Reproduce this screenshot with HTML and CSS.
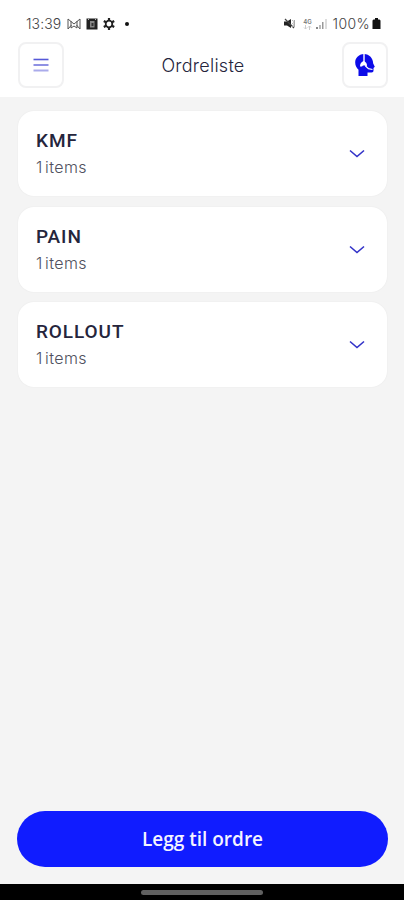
FILE: index.html
```html
<!DOCTYPE html>
<html lang="no">
<head>
  <meta charset="UTF-8" />
  <meta name="viewport" content="width=device-width, initial-scale=1.0"/>
  <title>Ordreliste</title>
  <link rel="stylesheet" href="styles.css">
</head>
<body>
  <div class="app">
    <header class="header">
      <div class="status-bar">
        <div class="status-left">
          <span class="clock">13:39</span>
          <svg class="icon-mail" width="14" height="12" viewBox="0 0 14 12" fill="none" stroke="#555">
            <path d="M1 11V1l6 5 6-5v10M1 11l3.500-4M13 11L9.500 7M4 3v7l3-2 3 2V3"/>
          </svg>
          <svg class="icon-app" width="12" height="12" viewBox="0 0 12 12">
            <rect x=".5" y=".5" width="11" height="11" fill="#222"/>
            <path d="M4 3h4.500v6.500H4z" fill="#888"/>
            <path d="M5.500 5h2v3h-2z" fill="#333"/>
            <path d="M2 1.500h1M9 1.500h1" stroke="#bbb"/>
          </svg>
          <svg class="icon-gear" width="12" height="12" viewBox="0 0 12 12" fill="none" stroke="#222">
            <circle cx="6" cy="6" r="3.300" stroke-width="1.800"/>
            <path d="M6 0v2.500M6 9.500V12M.8 3l2.200 1.300M9 7.700L11.200 9M.8 9L3 7.700M9 4.300L11.200 3" stroke-width="2.200"/>
          </svg>
          <span class="dot"></span>
        </div>
        <div class="status-right">
          <svg class="icon-mute" width="12" height="11" viewBox="0 0 12 11">
            <path d="M0 3.500h3L7 1v9L3 7.500H0z" fill="#222"/>
            <path d="M1 1l9 9" stroke="#444" stroke-width="1.200"/>
            <path d="M8 2.500c2.500 0 2.500 2.500.5 3 2 .5 2 3-.5 3M10.500 2v7" fill="none" stroke="#aaa"/>
          </svg>
          <span class="network">
            <span>4G</span>
            <svg width="9" height="5" viewBox="0 0 9 5" fill="none" stroke="#ccc">
              <path d="M2.500 0v4M1 2.500L2.500 4 4 2.500M6.500 5V1M5 2.500L6.500 1 8 2.500"/>
            </svg>
          </span>
          <svg class="icon-signal" width="12" height="11" viewBox="0 0 12 11">
            <path d="M0 9h2v2H0z" fill="#888"/>
            <path d="M3 7h2v4H3z" fill="#bbb"/>
            <path d="M6 4h1.500v7H6z" fill="#999"/>
            <path d="M9 1h2v10H9z" fill="#ddd"/>
          </svg>
          <span class="battery-text">100%</span>
          <svg class="icon-battery" width="9" height="12" viewBox="0 0 9 12">
            <path d="M3 0h3v1.500h1.500l1 1V11H.5V2.500l1-1H3z" fill="#111"/>
          </svg>
        </div>
      </div>

      <nav class="toolbar">
        <button class="icon-btn" aria-label="Meny">
          <svg width="16" height="14" viewBox="0 0 16 14" stroke-width="1.600">
            <path d="M0.500 1.500h15" stroke="#5558d8"/>
            <path d="M0.500 7h15" stroke="#7476dd"/>
            <path d="M0.500 12.500h15" stroke="#aaabeb" stroke-width="2"/>
          </svg>
        </button>
        <h1>Ordreliste</h1>
        <button class="icon-btn support" aria-label="Support">
          <svg width="20" height="23" viewBox="0 0 20 23">
            <path d="M9 0C3.500.3.200 4 .200 8.500c0 3 1.300 5.500 3.300 7.200V22h9v-3.500h4c1.400 0 2-.8 2-2.200V14l1.300-1.200-1.600-3.300C18 4 14.500.3 9 0z" fill="#0c0be8"/>
            <path d="M9 0v8" stroke="#fff" stroke-width="1.400"/>
            <path d="M8.500 7C6 8.200 5 9.800 5 12.500h2l1-1h2l1 1.500 1-1.500c0-2.300-1.200-3.700-3.500-4.500z" fill="#fff"/>
            <path d="M10.500 12l3 2.700 4 .8" fill="none" stroke="#fff" stroke-width="1.200"/>
          </svg>
        </button>
      </nav>
    </header>

    <main class="orders">
      <section class="card">
        <div class="card-text">
          <h2>KMF</h2>
          <p>1 items</p>
        </div>
        <svg class="chevron" width="16" height="9" viewBox="0 0 16 9"><path d="M1 1.500l7 6 7-6"/></svg>
      </section>
      <section class="card">
        <div class="card-text">
          <h2>PAIN</h2>
          <p>1 items</p>
        </div>
        <svg class="chevron" width="16" height="9" viewBox="0 0 16 9"><path d="M1 1.500l7 6 7-6"/></svg>
      </section>
      <section class="card">
        <div class="card-text">
          <h2>ROLLOUT</h2>
          <p>1 items</p>
        </div>
        <svg class="chevron" width="16" height="9" viewBox="0 0 16 9"><path d="M1 1.500l7 6 7-6"/></svg>
      </section>
    </main>

    <div class="footer">
      <button class="submit-btn">Legg til ordre</button>
    </div>

    <div class="nav-bar"><span class="handle"></span></div>
  </div>
</body>
</html>
```

FILE: styles.css
```css
* {
  margin: 0;
  padding: 0;
  box-sizing: border-box;
}

body {
  background: #f4f4f4;
  font-family: Roboto, sans-serif;
  color: #25253c;
}

.app {
  height: 100vh;
  display: flex;
  flex-direction: column;
  overflow: hidden;
}

svg {
  display: block;
  flex-shrink: 0;
}

.header {
  height: 97px;
  background: #fff;
}

/* Status bar */
.status-bar {
  height: 42px;
  padding: 5px 23px 0 26px;
  display: flex;
  align-items: center;
  justify-content: space-between;
  font-family: Inter, sans-serif;
  font-weight: 300;
  color: #444;
}

.status-left,
.status-right {
  display: flex;
  align-items: center;
}

.clock {
  width: 36px;
  font-size: 14px;
  letter-spacing: 0.1px;
  white-space: nowrap;
}

.icon-mail {
  margin-left: 5px;
}

.icon-app {
  margin-left: 5px;
}

.icon-gear {
  margin-left: 5px;
}

.dot {
  width: 4px;
  height: 4px;
  margin-left: 10px;
  border-radius: 50%;
  background: #111;
}

.network {
  width: 10px;
  margin-left: 6px;
  display: flex;
  flex-direction: column;
  align-items: center;
  font-size: 6px;
  font-weight: 600;
  line-height: 7px;
  color: #777;
}

.icon-signal {
  margin-left: 4px;
}

.battery-text {
  margin-left: 4px;
  font-size: 14px;
  letter-spacing: 0.4px;
}

.icon-battery {
  margin-left: 2px;
}

/* Toolbar */
.toolbar {
  padding: 0 16px 0 18px;
  display: flex;
  align-items: center;
  justify-content: space-between;
}

.toolbar h1 {
  font-family: Inter, sans-serif;
  font-size: 18px;
  font-weight: 300;
  letter-spacing: 0.25px;
}

.icon-btn {
  width: 46px;
  height: 46px;
  display: flex;
  align-items: center;
  justify-content: center;
  background: #fff;
  border: 2px solid #f1f1f2;
  border-radius: 8px;
  cursor: pointer;
}

/* Order cards */
.orders {
  flex: 1;
  padding: 14px 17px 0 18px;
  display: flex;
  flex-direction: column;
  gap: 10.600px;
}

.card {
  height: 85px;
  padding: 0 22px 0 18px;
  display: flex;
  align-items: center;
  justify-content: space-between;
  background: #fff;
  border-radius: 16px;
  box-shadow: 0 0 2px rgba(0, 0, 0, 0.06);
}

.card-text {
  padding-top: 1px;
}

.card h2 {
  font-size: 19px;
  font-weight: 500;
  line-height: 26px;
  letter-spacing: 0.9px;
}

.card p {
  font-family: Inter, sans-serif;
  font-size: 16px;
  font-weight: 300;
  line-height: 26px;
  letter-spacing: 0.4px;
  word-spacing: -2.500px;
  color: #50505e;
}

.chevron path {
  fill: none;
  stroke: #3232c8;
  stroke-width: 1.6;
}

/* Bottom button */
.footer {
  padding: 0 16px 17px 17px;
}

.submit-btn {
  width: 100%;
  height: 56px;
  display: block;
  border: none;
  border-radius: 28px;
  background: #101cff;
  color: #f4f4ff;
  font-family: "Open Sans", sans-serif;
  font-size: 19px;
  font-weight: 600;
  cursor: pointer;
}

.nav-bar {
  height: 16px;
  display: flex;
  align-items: center;
  justify-content: center;
  background: #000;
}

.handle {
  width: 122px;
  height: 5px;
  border-radius: 3px;
  background: #606060;
}
```
